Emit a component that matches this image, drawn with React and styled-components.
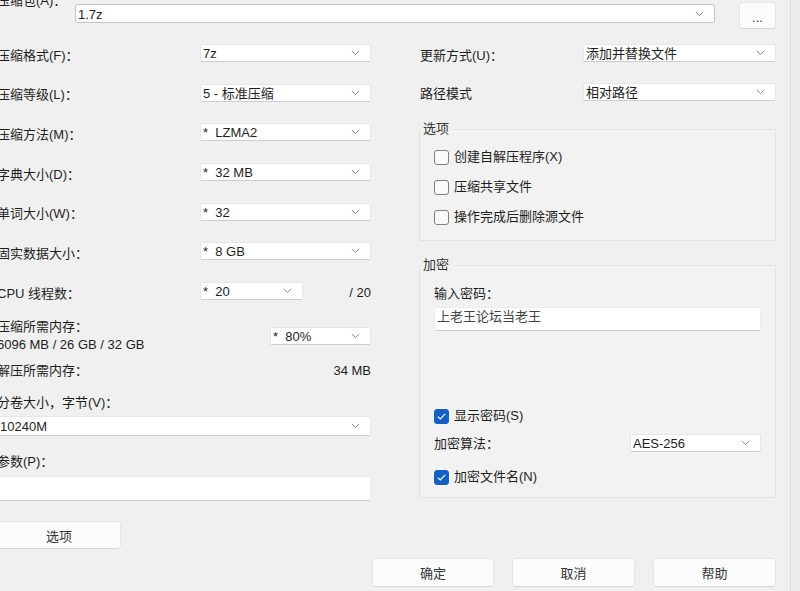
import React from 'react'
import styled, { createGlobalStyle } from 'styled-components'

const Global = createGlobalStyle`
  html, body {
    margin: 0;
    padding: 0;
    background: #ececec;
    overflow: hidden;
  }
  * {
    box-sizing: border-box;
  }
`

const Frame = styled.div`
  width: 800px;
  height: 591px;
  overflow: hidden;
  font-family: "Liberation Sans", "Noto Sans CJK SC", sans-serif;
  font-size: 13px;
  color: #1e1e1e;
`

const Dialog = styled.div`
  width: 794px;
  height: 600px;
  margin-left: -3px;
  padding-right: 14px;
  background: #f0f0f0;
  border-right: 1px solid #dcdcdc;
`

const TopRow = styled.div`
  display: flex;
  align-items: flex-start;
  margin-top: -7px;
`

const TopLabel = styled.div`
  width: 78px;
  line-height: 16px;
  flex: none;
`

const Main = styled.div`
  display: flex;
  gap: 48px;
  margin-top: 15px;
`

const LeftCol = styled.div`
  width: 374px;
  display: flex;
  flex-direction: column;
`

const RightCol = styled.div`
  width: 357px;
  display: flex;
  flex-direction: column;
`

const Row = styled.div`
  display: flex;
  align-items: center;
  height: 18px;
  margin-top: ${p => p.$mt || 0}px;
`

const Label = styled.div`
  width: ${p => p.$w || 203}px;
  flex: none;
  line-height: 18px;
  white-space: nowrap;
  padding-left: ${p => p.$pl || 0}px;
  margin-top: ${p => p.$drop || 0}px;
`

const Text = styled.div`
  line-height: 18px;
  white-space: nowrap;
  margin-top: ${p => p.$mt || 0}px;
`

const Value = styled.div`
  margin-left: auto;
  line-height: 18px;
  margin-top: ${p => p.$drop || 0}px;
`

const ComboBox = styled.div`
  display: flex;
  align-items: center;
  width: ${p => (p.$w ? `${p.$w}px` : 'auto')};
  flex: ${p => (p.$w ? 'none' : '1')};
  height: ${p => p.$h || 18}px;
  margin-top: ${p => p.$mt || 0}px;
  margin-left: ${p => (p.$right ? 'auto' : '0')};
  padding: 0 10px 0 2px;
  background: #fff;
  border: 1px solid ${p => (p.$edit ? '#c6c6c6' : '#e6e6e6')};
  border-bottom-color: ${p => (p.$edit ? '#c6c6c6' : '#cdcdcd')};
  border-radius: 2px;
  white-space: nowrap;
`

const ComboText = styled.span`
  flex: 1;
  line-height: 16px;
  padding-top: 2px;
  overflow: hidden;
  white-space: pre;
`

const Chevron = () => (
  <svg width="9" height="6" viewBox="0 0 9 6">
    <polyline points="0.8,1 4.5,4.5 8.2,1" fill="none" stroke="#8a8a8a" strokeWidth="1" />
  </svg>
)

const Combo = ({ children, ...rest }) => (
  <ComboBox {...rest}>
    <ComboText>{children}</ComboText>
    <Chevron />
  </ComboBox>
)

const Button = styled.div`
  display: flex;
  align-items: center;
  justify-content: center;
  width: ${p => p.$w}px;
  height: ${p => p.$h || 29}px;
  margin-top: ${p => p.$mt || 0}px;
  margin-left: ${p => p.$ml || 0}px;
  padding-top: ${p => p.$pt || 0}px;
  background: #fcfcfc;
  border: 1px solid #e4e4e4;
  border-bottom-color: #d6d6d6;
  border-radius: 4px;
  color: #333;
  flex: none;
`

const TextBox = styled.div`
  height: ${p => p.$h}px;
  margin-top: ${p => p.$mt || 0}px;
  background: #fff;
  border: 1px solid #ececec;
  border-bottom: 1px solid #cfcfcf;
  border-radius: 2px;
  padding: 1px 2px;
  color: #444;
  line-height: 16px;
`

const MemBlock = styled.div`
  display: flex;
  align-items: center;
  margin-top: 18px;
`

const Group = styled.fieldset`
  margin: ${p => p.$mt || 0}px 0 0 0;
  padding: 0;
  border: 1px solid #e2e2e2;
  background: #f2f2f2;
  min-width: 0;
`

const Legend = styled.legend`
  padding: 0 5px 0 3px;
  margin-left: 0;
  line-height: 16px;
  color: #333;
`

const GroupBody = styled.div`
  display: flex;
  flex-direction: column;
  padding: ${p => p.$pt}px 14px ${p => p.$pb}px 14px;
`

const CheckRow = styled.div`
  display: flex;
  align-items: center;
  gap: 5px;
  height: 18px;
  margin-top: ${p => p.$mt || 0}px;
  line-height: 18px;
`

const Box = styled.span`
  width: 15px;
  height: 15px;
  flex: none;
  display: flex;
  align-items: center;
  justify-content: center;
  border-radius: 3px;
  border: 1px solid ${p => (p.$on ? '#1461c4' : '#7f7f7f')};
  background: ${p => (p.$on ? '#1461c4' : '#fafafa')};
`

const Check = ({ on, label, mt }) => (
  <CheckRow $mt={mt}>
    <Box $on={on}>
      {on && (
        <svg width="9" height="7" viewBox="0 0 9 7">
          <polyline points="0.8,3.6 3.3,6 8.2,0.9" fill="none" stroke="#fff" strokeWidth="1.2" />
        </svg>
      )}
    </Box>
    <span>{label}</span>
  </CheckRow>
)

const BottomRow = styled.div`
  display: flex;
  justify-content: flex-end;
  gap: 18px;
  margin-top: 9px;
`

const leftRows = [
  ['压缩格式(F)：', '7z'],
  ['压缩等级(L)：', '5 - 标准压缩'],
  ['压缩方法(M)：', '*  LZMA2'],
  ['字典大小(D)：', '*  32 MB'],
  ['单词大小(W)：', '*  32'],
  ['固实数据大小：', '*  8 GB'],
]

export default function App() {
  return (
    <Frame>
      <Global />
      <Dialog>
        <TopRow>
          <TopLabel>压缩包(A)：</TopLabel>
          <Combo $edit $h={19} $mt={11}>1.7z</Combo>
          <Button $w={37} $h={27} $mt={9} $ml={24} $pt={4}>...</Button>
        </TopRow>

        <Main>
          <LeftCol>
            {leftRows.map(([label, value], i) => (
              <Row key={label} $mt={i === 0 ? 0 : 21.7}>
                <Label $drop={5}>{label}</Label>
                <Combo>{value}</Combo>
              </Row>
            ))}
            <Row $mt={21.7}>
              <Label $drop={5}>CPU 线程数：</Label>
              <Combo $w={103}>*  20</Combo>
              <Value $drop={4}>/ 20</Value>
            </Row>

            <MemBlock>
              <div>
                <Text>压缩所需内存：</Text>
                <Text>6096 MB / 26 GB / 32 GB</Text>
              </div>
              <Combo $w={101} $right>*  80%</Combo>
            </MemBlock>

            <Row $mt={7}>
              <Label $drop={2}>解压所需内存：</Label>
              <Value $drop={2}>34 MB</Value>
            </Row>

            <Text $mt={15}>分卷大小，字节(V)：</Text>
            <Combo $mt={4}>10240M</Combo>

            <Text $mt={17}>参数(P)：</Text>
            <TextBox $h={25} $mt={5} />

            <Button $w={124} $h={28} $mt={20}>选项</Button>
          </LeftCol>

          <RightCol>
            <Row>
              <Label $w={164} $pl={1} $drop={5}>更新方式(U)：</Label>
              <Combo>添加并替换文件</Combo>
            </Row>
            <Row $mt={21}>
              <Label $w={164} $pl={1} $drop={3}>路径模式</Label>
              <Combo>相对路径</Combo>
            </Row>

            <Group $mt={20}>
              <Legend>选项</Legend>
              <GroupBody $pt={11} $pb={14}>
                <Check label="创建自解压程序(X)" />
                <Check label="压缩共享文件" mt={12} />
                <Check label="操作完成后删除源文件" mt={12} />
              </GroupBody>
            </Group>

            <Group $mt={16}>
              <Legend>加密</Legend>
              <GroupBody $pt={12} $pb={11}>
                <Text>输入密码：</Text>
                <TextBox $h={24} $mt={4}>上老王论坛当老王</TextBox>
                <Check on label="显示密码(S)" mt={76} />
                <Row $mt={9}>
                  <Label $w={196} $drop={2}>加密算法：</Label>
                  <Combo>AES-256</Combo>
                </Row>
                <Check on label="加密文件名(N)" mt={16} />
              </GroupBody>
            </Group>
          </RightCol>
        </Main>

        <BottomRow>
          <Button $w={122}>确定</Button>
          <Button $w={123}>取消</Button>
          <Button $w={123}>帮助</Button>
        </BottomRow>
      </Dialog>
    </Frame>
  )
}
